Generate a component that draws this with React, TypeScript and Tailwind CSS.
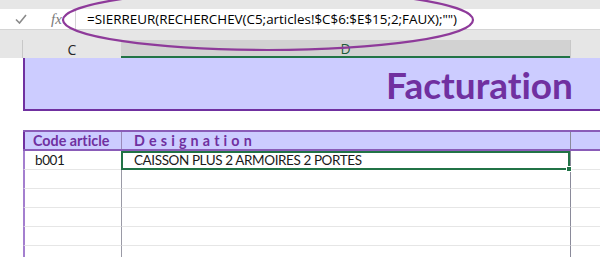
import React from "react";

const rows = [
  { code: "b001", label: "CAISSON PLUS 2 ARMOIRES 2 PORTES" },
  { code: "", label: "" },
  { code: "", label: "" },
  { code: "", label: "" },
  { code: "", label: "" },
  { code: "", label: "" },
];

export default function App() {
  return (
    <div className="relative w-[600px] h-[257px] overflow-hidden bg-white font-['Lato','Liberation_Sans',sans-serif] [font-variant-ligatures:none]">
      {/* Ribbon edge */}
      <div className="h-[9px] bg-[#e6e6e6]" />

      {/* Formula bar */}
      <div className="flex h-[20px] bg-white">
        <div className="flex w-[76px] items-center border-r border-[#d4d4d4]">
          <svg className="ml-[15px] h-[10px] w-[12px]" viewBox="0 0 12 10">
            <path d="M1 5.5 L4.5 9 L11 1" fill="none" stroke="#8a8a8a" strokeWidth="1.6" />
          </svg>
          <span className="ml-[24px] font-['Liberation_Serif',serif] text-[15px] italic leading-none text-[#7a7a7a]">
            fx
          </span>
        </div>
        <div className="flex flex-1 items-center pl-[11px] font-['Open_Sans',sans-serif] text-[13.4px] text-black">
          =SIERREUR(RECHERCHEV(C5;articles!$C$6:$E$15;2;FAUX);"")
        </div>
      </div>

      <div className="h-[11px] border-t border-[#d4d4d4] bg-[#e6e6e6]" />

      {/* Column headers */}
      <div className="flex h-[18px] text-[14px] font-['Open_Sans',sans-serif] text-[#262626]">
        <div className="w-[23px] border-r border-[#c8c8c8] bg-[#e6e6e6]" />
        <div className="flex w-[98px] items-center justify-center bg-[#e6e6e6]">C</div>
        <div className="flex w-[449px] items-center justify-center border-b-2 border-[#217346] bg-[#d2d2d2] text-[#1e5a3a]">
          D
        </div>
        <div className="flex-1 border-l border-[#c8c8c8] bg-[#e6e6e6]" />
      </div>

      {/* Sheet */}
      <div className="flex">
        <div className="w-[23px] shrink-0" />
        <div className="flex-1">
          {/* Title band */}
          <div className="flex h-[53px] items-center justify-end border-b-2 border-l-2 border-[#7030a0] bg-[#ccccff] pr-[27px]">
            <span className="mt-[2px] text-[37px] font-bold leading-none text-[#7030a0]">Facturation</span>
          </div>

          <div className="h-[19px]" />

          {/* Table header */}
          <div className="flex h-[21px] border-y-2 border-[#8a5cb8] bg-[#ccccff] text-[14.3px] font-bold text-[#7030a0]">
            <div className="flex w-[98px] items-center border-l-2 border-[#7030a0] pl-[8px]">Code article</div>
            <div className="flex w-[449px] items-center border-l border-[#9a8ab8] pl-[12px] tracking-[0.29em]">
              Designation
            </div>
            <div className="flex-1 border-l border-[#8a8a9a]" />
          </div>

          {/* Rows */}
          {rows.map((r, i) => (
            <div key={i} className="flex h-[19px] text-[13.5px] tracking-[-0.03em] text-[#1a1a1a]">
              <div className="flex w-[98px] items-center border-b border-l-2 border-b-[#e6e6e6] border-l-[#a47fcf] pl-[10px]">
                {r.code}
              </div>
              <div
                className={
                  i === 0
                    ? "relative flex w-[449px] items-center border-2 border-[#217346] pl-[11px]"
                    : "flex w-[449px] items-center border-b border-l border-b-[#e6e6e6] border-l-[#9a9aa6] pl-[12px]"
                }
              >
                {r.label}
                {i === 0 && (
                  <span className="absolute -bottom-[4px] -right-[4px] h-[6px] w-[6px] border border-white bg-[#217346]" />
                )}
              </div>
              <div className="flex-1 border-b border-l border-b-[#e6e6e6] border-l-[#8a8a9a]" />
            </div>
          ))}
        </div>
      </div>

      {/* Annotation ellipse around the formula */}
      <svg className="pointer-events-none absolute left-0 top-0" width="600" height="257">
        <ellipse cx="268" cy="20" rx="205" ry="30" fill="none" stroke="#8e3a9a" strokeWidth="2.2" />
      </svg>
    </div>
  );
}
